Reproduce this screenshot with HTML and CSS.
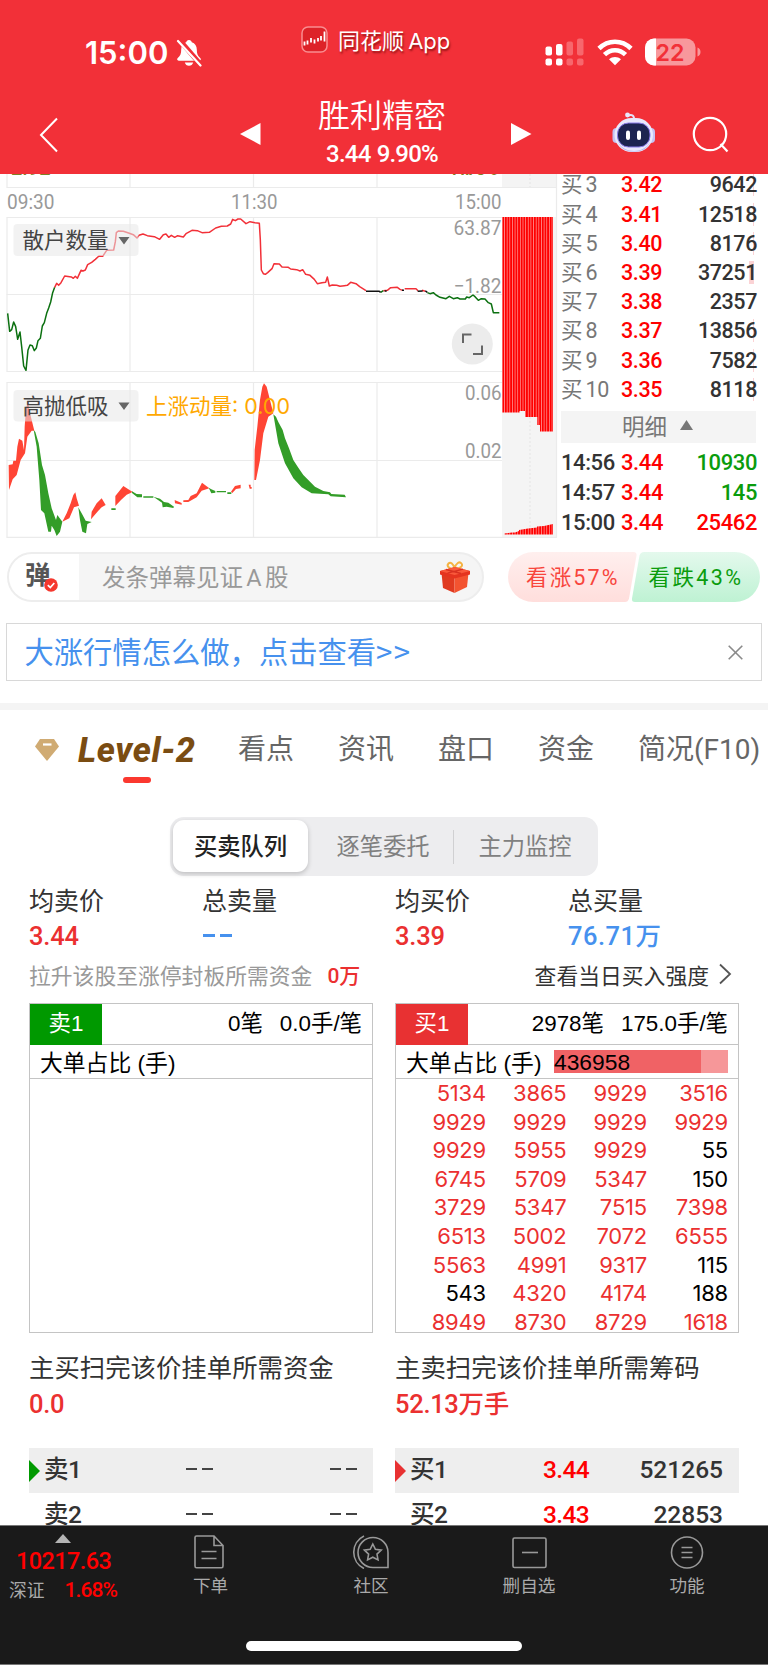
FILE: index.html
```html
<!DOCTYPE html>
<html lang="zh-CN">
<head>
    <meta charset="UTF-8">
    <meta name="viewport" content="width=device-width, initial-scale=1.0">
    <title>胜利精密</title>
    <link rel="stylesheet" href="styles.css">
</head>
<body>

<div class="content">
    <header class="header">
        <div class="status">
            <span class="clock">15:00</span>
            <svg class="bell" width="26" height="28" viewBox="0 0 26 28">
                <path d="M13 1c-1.600 0-2.600 1-2.800 2.300C7 4.300 5.200 7 5.200 10.500c0 4-.8 6.300-3.400 8.600-1.200 1.100-.7 2.600.9 2.600h20.600c1.600 0 2.100-1.500.9-2.600-2.600-2.300-3.400-4.600-3.400-8.600 0-3.500-1.800-6.200-5-7.200C15.600 2 14.600 1 13 1zM8.800 23.500c.5 2 2.200 3.300 4.200 3.300s3.700-1.300 4.200-3.300z" fill="#fff"/>
                <path d="M3.500 1l21.500 25" stroke="#f23038" stroke-width="5"/>
                <path d="M2 2l22.500 24.500" stroke="#fff" stroke-width="2.200" stroke-linecap="round"/>
            </svg>
            <svg class="app-icon" width="28" height="28" viewBox="0 0 28 28">
                <rect x="1" y="1" width="25" height="25" rx="6" fill="#dd2228" stroke="#f98d90" stroke-width="1.500"/>
                <path d="M3.500 15.500v4M6.500 14.500v4M10 12v4.500M13.500 13.500v4M17 12v3.500M20 10v4.500M23.500 5.500v10" stroke="#fff" stroke-width="1.800"/>
            </svg>
            <span class="app-name">同花顺 App</span>
            <svg class="signal" width="158" height="28" viewBox="544 37.500 158 28">
                <g fill="#fff">
                    <rect x="545.500" y="46" width="6.500" height="9" rx="2"/>
                    <rect x="556" y="43.500" width="6.500" height="11.500" rx="2"/>
                    <rect x="545.500" y="58" width="6.500" height="7" rx="2"/>
                    <rect x="556" y="58" width="6.500" height="7" rx="2"/>
                </g>
                <g fill="#f7676d">
                    <rect x="566.500" y="41" width="6.500" height="14" rx="2"/>
                    <rect x="577" y="38" width="6.500" height="17" rx="2"/>
                    <rect x="566.500" y="58" width="6.500" height="7" rx="2"/>
                    <rect x="577" y="58" width="6.500" height="7" rx="2"/>
                </g>
                <g fill="none" stroke="#fff" stroke-width="4.600">
                    <path d="M599 48c9-9 23-9 32 0"/>
                    <path d="M604.500 54.200c6-6 15-6 21 0"/>
                </g>
                <path d="M609 58.800c3.600-3.200 8.400-3.200 12 0l-6 6z" fill="#fff"/>
                <rect x="645" y="38" width="50.500" height="27" rx="9" fill="#f8989c"/>
                <path d="M656 38h-2a9 9 0 0 0-9 9v9a9 9 0 0 0 9 9h2z" fill="#fff"/>
                <path d="M697.500 47c4 1.500 4 7.500 0 9z" fill="#f8989c"/>
                <text class="battery-text" x="655.500" y="60" textLength="29" lengthAdjust="spacingAndGlyphs">22</text>
            </svg>
        </div>
        <div class="nav">
            <svg width="20" height="36" viewBox="0 0 20 36"><path d="M18 1.500L2 18l16 16.500" fill="none" stroke="#fff" stroke-width="2"/></svg>
            <svg class="prev" width="21" height="24" viewBox="0 0 21 24"><path d="M20.500 1v22L0 12z" fill="#fff"/></svg>
            <div class="title">
                <h1>胜利精密</h1>
                <p>3.44 9.90%</p>
            </div>
            <svg class="next" width="21" height="24" viewBox="0 0 21 24"><path d="M0 1v22l20.500-11z" fill="#fff"/></svg>
            <svg class="robot" width="44" height="42" viewBox="0 0 44 42">
                <path d="M16 3.500c4-1.500 6.500 0 6 5" fill="none" stroke="#e4e4fb" stroke-width="2"/>
                <circle cx="15.500" cy="3" r="2.400" fill="#e8e8fc"/>
                <rect x="0.500" y="16" width="8" height="15" rx="4" fill="#c5c2f3"/>
                <rect x="35" y="16" width="8" height="15" rx="4" fill="#c5c2f3"/>
                <rect x="2.500" y="6" width="38.500" height="34" rx="17" fill="#e9e9fc"/>
                <path d="M6 30c6 12 26 12 32 0-3 7-8 9.500-16 9.500S9 37 6 30z" fill="#b5b1ef"/>
                <rect x="5.500" y="11" width="32.500" height="24" rx="11" fill="#1d2450" stroke="#8a7be8"/>
                <rect x="14" y="18.500" width="4" height="9.500" rx="2" fill="#fff"/>
                <rect x="25" y="18.500" width="4" height="9.500" rx="2" fill="#fff"/>
            </svg>
            <svg width="38" height="38" viewBox="0 0 38 38"><circle cx="18" cy="18" r="16.200" fill="none" stroke="#fff" stroke-width="2.200"/><path d="M28.500 28l7 7.500" stroke="#fff" stroke-width="2.200"/></svg>
        </div>
    </header>

    <section class="market">
        <svg class="chart" width="558" height="364" viewBox="0 174 558 364">
            <defs>
                <pattern id="bars" x="502.300" y="0" width="2.640" height="10" patternUnits="userSpaceOnUse">
                    <rect width="2.640" height="10" fill="#ff9a9a"/>
                    <rect width="1.900" height="10" fill="#ff0000"/>
                </pattern>
            </defs>
            <path d="M502 174h55v14h-55zM502 217h55v320h-55z" fill="#f4f4f4"/>
            <path d="M530 174v14M530 217v320" stroke="#e4e4e4" stroke-dasharray="2 2"/>
            <g class="grid-lines">
                <path d="M6.500 187.500H557M6.500 217.500H502M6.500 294.500H502M6.500 371.500H502M6.500 382.500H502M6.500 460.500H502M6.500 537.300H557"/>
                <path d="M7 174v13.500M130 174v13.500M253.500 174v13.500M377 174v13.500M7 217.500v154M130 217.500v154M253.500 217.500v154M377 217.500v154M7 382.500v155M130 382.500v155M253.500 382.500v155M377 382.500v155M556.500 174v363"/>
            </g>
            <g class="clipped-labels">
                <text x="11" y="175.200">2.92</text>
                <text x="448" y="175.200" textLength="50">11.70%</text>
            </g>

            <g transform="translate(0 170) scale(.33333)">
                <g class="line">
                    <path stroke="#0b7010" d="M23 430L29 484 35 479 41 456 47 470 53 508 60 486 65 530 71 588 78 601 84 540 90 525 97 527 103 542 109 534 114 512 121 505 127 468 133 458 140 430 146 414 152 396 158 368 164 352"/>
                    <path stroke="#f23038" d="M164 352L170 340 176 346 183 338 194 318 214 321 220 325 226 319 232 325 243 301 249 303 256 300 263 284 275 277 286 268 297 258 308 259 320 241 341 240 346 215 349 188 355 183 370 184 388 190 400 194 411 204 417 196 429 192 442 197 463 200 479 208 490 194 498 192 506 202 514 196 524 202 533 197 550 201 558 191 576 181 592 182 606 188 628 187 647 174 664 169 682 168 692 162 698 148 706 152 714 147 722 147 738 161 750 155 765 158 778 160 781 210 784 300 790 311 796 313 803 308 816 296 822 281 838 282 846 291 865 292 872 297 890 299 900 303 908 299 917 313 930 316 943 328 952 341 966 338 977 337 982 321 988 348 997 345 1010 346 1020 349 1033 347 1042 346 1052 337 1068 341 1079 350 1098 362M1150 362L1162 361 1172 353 1192 352 1200 358 1208 361M1214 356L1248 356 1254 362M1266 361L1276 364"/>
                    <path stroke="#111" d="M1098 364L1138 364 1142 367M1154 363h6M1206 361l6 0M1253 364L1268 363M1276 363l6 4"/>
                    <path stroke="#0b7010" d="M1142 367L1150 362M1282 368L1290 371 1300 368 1308 375 1320 382 1338 386 1348 379 1360 386 1372 383 1380 387 1396 387 1400 381 1408 383 1419 375 1425 380 1435 391 1444 386 1455 387 1465 398 1474 402 1480 428 1498 428"/>
                </g>
                <g fill="#ff4535">
                    <path d="M26 885L38 883 40 872 48 872 52 830 57 806 67 812 72 840 74 770 78 715 84 695 90 730 103 782 95 782 82 800 75 850 62 870 50 915 38 928 27 960z"/>
                    <path d="M187 1055L200 1030 212 1000 220 975 226 967 230 985 237 1007 222 1012 208 1045z"/>
                    <path d="M273 1048L275 1025 290 1000 305 985 317 1005 305 1012 295 1022z"/>
                    <path d="M346 1008L346 978 370 948 398 966 380 974 363 990z"/>
                    <path d="M524 990L545 999 545 1004 525 1000zM550 991L565 990 572 978 590 970 606 938 628 955 605 962 590 982 565 996 550 996z"/>
                    <path d="M693 965L705 948 722 944 722 955 708 957 697 969zM746 944h6v7h3v5h-6z"/>
                    <path d="M763 930L764 840 772 770 780 690 787 650 792 640 800 650 810 690 820 730 805 740 790 790 780 870 768 930z"/>
                </g>
                <g fill="#339d28">
                    <path d="M101 780L106 786 116 820 126 885 135 915 145 970 155 1015 168 1050 172 1035 187 1055 180 1085 170 1098 163 1080 155 1067 153 1085 145 1085 133 1030 123 1020 118 930 110 830z"/>
                    <path d="M235 1012L245 1030 257 1052 275 1056 262 1062 258 1090 247 1085 240 1050z"/>
                    <path d="M334 1015h13v5h-13zM396 964l14 8 16 1v9h-14l-16-13zM430 979h30v4h-30zM460 980L480 986 492 996 505 998 522 1010 520 1014 500 1010 488 1012 486 998z"/>
                    <path d="M626 953L634 958 646 963 646 968 634 970zM650 963h28v4h-28zM682 967h12v5h-12z"/>
                    <path d="M820 733L828 740 835 756 848 780 855 805 867 835 880 870 895 893 910 915 945 950 970 963 990 967 994 972 1034 974 1038 982 992 979 985 973 935 970 905 952 880 925 855 880 835 820z"/>
                </g>
            </g>

            <path fill="url(#bars)" d="M502.300 217V412.500H519.500V411H525V417H537.300V425H540V431.500H553V217z"/>
            <path fill="url(#bars)" d="M504.300 534.500V533.500L512 532.500H515L519 531V530L528 528.500 537 527.500V526.500L544 526 553 524V534.500z"/>

            <g class="axis">
                <text x="7" y="209" textLength="47.500" lengthAdjust="spacingAndGlyphs">09:30</text>
                <text x="231" y="209" textLength="46.500" lengthAdjust="spacingAndGlyphs">11:30</text>
                <text x="455" y="209" textLength="46.500" lengthAdjust="spacingAndGlyphs">15:00</text>
                <text x="453.500" y="235" textLength="48" lengthAdjust="spacingAndGlyphs">63.87</text>
                <text x="453.500" y="293" textLength="48" lengthAdjust="spacingAndGlyphs">−1.82</text>
                <text x="465" y="400" textLength="36.500" lengthAdjust="spacingAndGlyphs">0.06</text>
                <text x="465" y="458" textLength="36.500" lengthAdjust="spacingAndGlyphs">0.02</text>
            </g>

            <circle cx="472.300" cy="344" r="20.500" fill="#ececec"/>
            <path d="M463 343v-8.500h8.500M482 345.500v8.500h-9" fill="none" stroke="#666" stroke-width="2"/>

            <rect x="13.500" y="224" width="125" height="32" rx="4" fill="#e8e8e8" fill-opacity=".55"/>
            <rect x="13.500" y="390" width="125" height="31.500" rx="4" fill="#e8e8e8" fill-opacity=".55"/>
            <g class="indicator">
                <text x="22.500" y="248">散户数量</text>
                <text x="22.500" y="413.700">高抛低吸</text>
                <text class="momentum" x="146" y="413.700" textLength="144">上涨动量: 0.00</text>
            </g>
            <path d="M118.500 237h11l-5.500 7.500zM118.500 402.500h11l-5.500 7.500z" fill="#666"/>
        </svg>

        <div class="book">
            <div class="quotes">
                <div class="quote"><span>买 3</span><b>3.42</b><em><i style="width: 1px"></i>9642</em></div>
                <div class="quote"><span>买 4</span><b>3.41</b><em><i style="width: 1px"></i>12518</em></div>
                <div class="quote"><span>买 5</span><b>3.40</b><em><i style="width: 1px"></i>8176</em></div>
                <div class="quote"><span>买 6</span><b>3.39</b><em><i style="width: 5px"></i>37251</em></div>
                <div class="quote"><span>买 7</span><b>3.38</b><em>2357</em></div>
                <div class="quote"><span>买 8</span><b>3.37</b><em><i style="width: 1px"></i>13856</em></div>
                <div class="quote"><span>买 9</span><b>3.36</b><em><i style="width: 1px"></i>7582</em></div>
                <div class="quote"><span>买 10</span><b>3.35</b><em><i style="width: 1px"></i>8118</em></div>
            </div>
            <div class="detail-title">明细<svg width="13" height="10" viewBox="0 0 13 10"><path d="M0 10L6.500 0 13 10z" fill="#777"/></svg></div>
            <div class="trade"><span>14:56</span><b>3.44</b><em class="green">10930</em></div>
            <div class="trade"><span>14:57</span><b>3.44</b><em class="green">145</em></div>
            <div class="trade"><span>15:00</span><b>3.44</b><em class="red">25462</em></div>
        </div>
    </section>

    <section class="danmu">
        <div class="danmu-input">
            <div class="danmu-toggle">弹
                <svg class="danmu-check" width="14" height="14" viewBox="0 0 14 14"><circle cx="7" cy="7" r="6.800" fill="#f5382e"/><path d="M3.800 7.200l2.500 2.400 4-4.600" fill="none" stroke="#fff" stroke-width="1.700"/></svg>
            </div>
            <div class="danmu-text">发条弹幕见证 A 股</div>
            <svg class="gift" width="32" height="34" viewBox="0 0 32 34">
                <path d="M15 9C9 8.500 7.500 5.500 9.500 3.500S14.500 4 15.500 8.500C17 3 20.500 1 22.500 3.500S21 8.500 16 9" fill="none" stroke="#f5b342" stroke-width="2"/>
                <path d="M2.500 13l13 4v16L4 28z" fill="#e03a20"/>
                <path d="M29.500 13l-14 4v16L28 27z" fill="#f35330"/>
                <path d="M1 11l15-4 15 4v3.500l-15.500 4L1 14.500z" fill="#e5341f"/>
                <path d="M1 11l15-4 15 4-15.500 4z" fill="#f9593b"/>
                <path d="M7 9.500l15 4M24 9.200l-15.500 4" stroke="#d93120" stroke-width="1.300"/>
            </svg>
        </div>
        <svg class="vote" width="254" height="50" viewBox="508 552 254 50">
            <defs>
                <linearGradient id="up" x1="0" y1="0" x2="0" y2="1"><stop offset="0" stop-color="#ffefee"/><stop offset="1" stop-color="#ffdedc"/></linearGradient>
                <linearGradient id="down" x1="0" y1="0" x2="0" y2="1"><stop offset="0" stop-color="#e4f9ed"/><stop offset="1" stop-color="#bef2d3"/></linearGradient>
            </defs>
            <path d="M534 552H634.500Q638 552 637.500 555.500L630 598.500Q629 602 626 602H534A25 25 0 0 1 534 552z" fill="url(#up)"/>
            <path d="M645 552H736A25 25 0 0 1 736 602H636Q632.500 602 633 598.500L640.500 555.500Q641.500 552 645 552z" fill="url(#down)"/>
            <text x="527" y="585" fill="#f8453c" textLength="91.500">看涨57%</text>
            <text x="649.500" y="585" fill="#0a9c0d" textLength="92.500">看跌43%</text>
        </svg>
    </section>

    <div class="banner">
        <span>大涨行情怎么做，点击查看<span class="more">&gt;&gt;</span></span>
        <svg width="15" height="15" viewBox="0 0 15 15"><path d="M.7.700l13.600 13.600M14.300.700L.7 14.300" stroke="#8a8a8a" stroke-width="1.600"/></svg>
    </div>

    <div class="divider"></div>

    <nav class="tabs">
        <svg width="26" height="24" viewBox="0 0 26 24"><path d="M6 1h14l5 7.500L13 23 1 8.500z" fill="#d0ab73"/><path d="M9 6.500h8.500" stroke="#fff" stroke-width="2.200"/></svg>
        <span class="tab active">Level-2</span>
        <span class="tab">看点</span>
        <span class="tab">资讯</span>
        <span class="tab">盘口</span>
        <span class="tab">资金</span>
        <span class="tab last">简况(F10)</span>
    </nav>

    <div class="segment">
        <span class="on">买卖队列</span>
        <span class="mid">逐笔委托</span>
        <span class="split">主力监控</span>
    </div>

    <section class="panels">
        <div class="panel">
            <div class="stats">
                <div><label>均卖价</label><b>3.44</b></div>
                <div><label>总卖量</label><b class="blue"><u></u><u></u></b></div>
            </div>
            <div class="hint">拉升该股至涨停封板所需资金<b>0万</b></div>
            <div class="box">
                <div class="box-head"><span class="tag sell">卖1</span><span>0笔</span><span>0.0手/笔</span></div>
                <div class="box-ratio">大单占比 (手)</div>
            </div>
            <p class="need">主买扫完该价挂单所需资金</p>
            <b class="need-value">0.0</b>
            <div class="level first sell"><span>卖1</span><span class="dash"><u></u><u></u></span><span class="dash"><u></u><u></u></span></div>
            <div class="level"><span>卖2</span><span class="dash"><u></u><u></u></span><span class="dash"><u></u><u></u></span></div>
        </div>
        <div class="panel">
            <div class="stats">
                <div><label>均买价</label><b>3.39</b></div>
                <div><label>总买量</label><b class="blue">76.71万</b></div>
            </div>
            <div class="hint link">查看当日买入强度<svg width="14" height="22" viewBox="0 0 14 22"><path d="M2 1.500L12 11 2 20.500" fill="none" stroke="#555" stroke-width="1.800"/></svg></div>
            <div class="box">
                <div class="box-head"><span class="tag buy">买1</span><span>2978笔</span><span>175.0手/笔</span></div>
                <div class="box-ratio">大单占比 (手)<div class="ratio">436958</div></div>
                <div class="orders">
                    <span>5134</span><span>3865</span><span>9929</span><span>3516</span>
                    <span>9929</span><span>9929</span><span>9929</span><span>9929</span>
                    <span>9929</span><span>5955</span><span>9929</span><span class="small">55</span>
                    <span>6745</span><span>5709</span><span>5347</span><span class="small">150</span>
                    <span>3729</span><span>5347</span><span>7515</span><span>7398</span>
                    <span>6513</span><span>5002</span><span>7072</span><span>6555</span>
                    <span>5563</span><span>4991</span><span>9317</span><span class="small">115</span>
                    <span class="small">543</span><span>4320</span><span>4174</span><span class="small">188</span>
                    <span>8949</span><span>8730</span><span>8729</span><span>1618</span>
                </div>
            </div>
            <p class="need">主卖扫完该价挂单所需筹码</p>
            <b class="need-value">52.13万手</b>
            <div class="level first buy"><span>买1</span><b>3.44</b><em>521265</em></div>
            <div class="level"><span>买2</span><b>3.43</b><em>22853</em></div>
        </div>
    </section>
</div>

<footer class="toolbar">
    <div class="index">
        <svg width="16" height="9" viewBox="0 0 16 9"><path d="M8 0l8 9H0z" fill="#b5b5b5"/></svg>
        <b>10217.63</b>
        <p>深证<span>1.68%</span></p>
    </div>
    <div class="tool order">
        <svg width="34" height="34" viewBox="0 0 34 34"><path d="M3 2.500q0-1.500 1.500-1.500H22l9 9.500V31q0 1.700-1.500 1.700H4.500Q3 32.700 3 31zM22 1v9.500h9M9.500 16.500h15M9.500 23.500h15"/></svg>
        <span>下单</span>
    </div>
    <div class="tool">
        <svg width="38" height="34" viewBox="0 0 38 34"><path d="M36 32.500H21A15 15 0 1 1 36 17.500zM12 1A18 18 0 0 0 12 33.500M20.800 9l2.600 5.300 5.800.8-4.200 4 1 5.800-5.200-2.700-5.200 2.700 1-5.800-4.200-4 5.800-.8z"/></svg>
        <span>社区</span>
    </div>
    <div class="tool">
        <svg width="36" height="34" viewBox="-1 0 36 34"><rect x="1" y="3" width="33" height="29.500" rx="1.500"/><path d="M10 17.500h16"/></svg>
        <span>删自选</span>
    </div>
    <div class="tool">
        <svg width="34" height="34" viewBox="0 0 34 34"><circle cx="17" cy="17.500" r="15.500"/><path d="M11.500 12.500h11M11.500 17.500h11M11.500 22.500h11"/></svg>
        <span>功能</span>
    </div>
    <div class="home-bar"></div>
</footer>

</body>
</html>
```

FILE: styles.css
```css
* {
    box-sizing: border-box;
}
body {
    margin: 0;
    width: 768px;
    height: 1665px;
    overflow: hidden;
    background: #fff;
    color: #333;
    font-family: Roboto, "Noto Sans CJK SC", sans-serif;
}
h1, p {
    margin: 0;
    font-weight: 400;
}
b {
    font-weight: 500;
}
em, i {
    font-style: normal;
}
u {
    text-decoration: none;
}
svg {
    display: block;
    flex: none;
}
span, b, label {
    white-space: nowrap;
}
.content {
    height: 1525px;
    overflow: hidden;
}

/* header */
.header {
    height: 174px;
    background: #f23038;
    color: #fff;
}
.status {
    display: flex;
    height: 80px;
    padding: 26px 0 0 85px;
}
.clock {
    width: 91px;
    margin-top: 7px;
    font: 600 31px/40px Inter, sans-serif;
    letter-spacing: 0;
}
.bell {
    margin-top: 13px;
}
.app-icon {
    margin-left: 99px;
}
.app-name {
    width: 120px;
    margin-left: 9px;
    font-family: Inter, "Noto Sans CJK SC", sans-serif;
    font-size: 22px;
    line-height: 30px;
    word-spacing: -2px;
    text-shadow: 1px 2px 2px rgba(90, 0, 0, 0.6);
}
.signal {
    margin: 11.500px 0 0 86px;
}
.battery-text {
    font: 600 23px Inter, sans-serif;
    fill: #f23038;
}
.nav {
    display: flex;
    height: 94px;
    align-items: center;
    padding: 15px 0 0 39px;
}
.prev {
    margin: -2px 0 0 181px;
}
.title {
    width: 250px;
    margin-top: -2px;
    padding-right: 8px;
    text-align: center;
}
.title h1 {
    font-family: "Noto Sans CJK SC", sans-serif;
    font-size: 32px;
    line-height: 40px;
    font-weight: 350;
}
.title p {
    font-size: 24px;
    line-height: 42px;
    font-weight: 500;
    letter-spacing: -0.800px;
    word-spacing: 1px;
}
.next {
    margin-top: -2px;
}
.robot {
    margin: -4px 36px 0 80px;
}

/* charts and order book */
.market {
    display: flex;
    height: 364px;
    overflow: hidden;
}
.grid-lines {
    fill: none;
    stroke: #ebebeb;
    stroke-width: 1.200;
}
.clipped-labels {
    font-size: 20px;
    font-weight: 500;
    fill: #7d8226;
}
.line {
    fill: none;
    stroke-width: 4.500;
    stroke-linejoin: round;
}
.axis {
    font-size: 21px;
    fill: #999;
}
.indicator {
    font-family: "Noto Sans CJK SC", sans-serif;
    font-size: 21.500px;
    fill: #444;
}
.momentum {
    font-family: Inter, "Noto Sans CJK SC", sans-serif;
    fill: #ffa800;
}
.book {
    width: 204px;
    padding-left: 3px;
}
.quotes {
    margin-top: -3.600px;
}
.quote, .trade {
    display: grid;
    grid-template-columns: 60px 50px 86px;
    height: 29.200px;
    line-height: 29.200px;
    font-size: 21.500px;
    letter-spacing: -0.400px;
}
.quote span {
    color: #777;
    word-spacing: -1.500px;
}
.quote b, .trade b {
    color: #f00;
}
.quote em, .trade em {
    position: relative;
    text-align: right;
    font-weight: 500;
}
.quote i {
    position: absolute;
    right: 3px;
    top: 3px;
    height: 23px;
    background: #fbd3d5;
    z-index: -1;
}
.detail-title {
    display: flex;
    align-items: center;
    justify-content: center;
    gap: 13px;
    width: 195px;
    height: 32px;
    margin: 7px 0 4.800px;
    padding: 0 2px 3px 0;
    background: #f4f4f4;
    color: #777;
    font-size: 22.500px;
}
.trade {
    height: 30.300px;
    line-height: 30.300px;
    font-size: 22px;
}
.trade span {
    font-weight: 500;
}
.red {
    color: #f00;
}
.green {
    color: #0a9c0d;
}

/* comments */
.danmu {
    display: flex;
    justify-content: space-between;
    margin: 14px 7px 0 7px;
}
.danmu-input {
    display: flex;
    align-items: center;
    width: 477px;
    height: 50px;
    border: 2px solid #ededed;
    border-radius: 25px;
    background: #f5f5f5;
    overflow: hidden;
}
.danmu-toggle {
    position: relative;
    width: 70px;
    height: 46px;
    padding-left: 16px;
    background: #fff;
    color: #555;
    font-size: 25.500px;
    line-height: 43px;
    font-weight: 700;
}
.danmu-check {
    position: absolute;
    left: 35px;
    top: 24px;
}
.danmu-text {
    width: 337px;
    padding: 0 0 2px 23px;
    color: #999;
    font-size: 23.500px;
    word-spacing: -2.500px;
}
.gift {
    margin-left: 23px;
}
.vote text {
    font-size: 21.500px;
}
.banner {
    display: flex;
    align-items: center;
    justify-content: space-between;
    height: 58px;
    margin: 21px 6px 0 6px;
    padding: 0 18px 0 17.500px;
    border: 1px solid #d8d8d8;
    color: #4691ee;
    font-family: "Noto Sans CJK SC", sans-serif;
    font-size: 29.300px;
    line-height: 50px;
}
.banner > span {
    padding-bottom: 4px;
}
.more {
    letter-spacing: 1.500px;
}
.divider {
    height: 7px;
    margin-top: 22px;
    background: #f4f4f4;
}

/* tabs */
.tabs {
    display: flex;
    align-items: center;
    height: 80px;
    padding-left: 34px;
}
.tab {
    flex: none;
    width: 100px;
    color: #666;
    font-size: 28px;
    line-height: 78px;
}
.tab.active {
    position: relative;
    width: 178px;
    padding-left: 18px;
    color: #7a4c12;
    font-size: 34.500px;
    font-weight: 800;
    font-style: italic;
    line-height: 80px;
    letter-spacing: 0.600px;
}
.tab.active::after {
    content: "";
    position: absolute;
    left: 63px;
    top: 67px;
    width: 28px;
    height: 6px;
    border-radius: 3px;
    background: #fb382f;
}
.tab.last {
    width: auto;
}
.segment {
    display: flex;
    width: 428px;
    height: 59px;
    margin: 27px 0 0 170px;
    padding: 3px;
    border-radius: 14px;
    background: #ededef;
}
.segment span {
    flex: 1;
    padding-left: 2px;
    color: #808080;
    font-size: 23.300px;
    line-height: 54px;
    text-align: center;
}
.segment .on {
    flex: none;
    width: 135px;
    height: 52px;
    padding-left: 0;
    border-radius: 11px;
    background: #fff;
    box-shadow: 0 2px 5px rgba(0, 0, 0, 0.2);
    color: #222;
    font-weight: 500;
    margin-right: 3px;
}
.segment .split {
    background: linear-gradient(#d0d0d2, #d0d0d2) 0 10px / 1px 34px no-repeat;
}

/* level-2 queues */
.panels {
    display: flex;
    gap: 22px;
    padding: 9px 0 0 29px;
}
.panel {
    width: 344px;
}
.stats {
    display: grid;
    grid-template-columns: 173px 1fr;
}
.stats label, .stats b {
    display: block;
    height: 34px;
    line-height: 34px;
    font-size: 25px;
}
.stats b {
    color: #eb3030;
    font-size: 25.500px;
    line-height: 35px;
    letter-spacing: -0.200px;
}
.stats b.blue {
    color: #4691ee;
    letter-spacing: 0.500px;
}
.stats u {
    display: inline-block;
    width: 12px;
    height: 3px;
    margin: 0 3.500px 5px 1px;
    vertical-align: middle;
    background: #4691ee;
}
.hint {
    display: flex;
    align-items: center;
    height: 32px;
    margin-top: 5px;
    color: #999;
    font-size: 21.800px;
}
.hint b {
    margin-left: 15px;
    font-size: 21px;
    color: #eb3030;
}
.hint.link {
    justify-content: flex-end;
    gap: 9px;
    padding-right: 7px;
    color: #333;
}
.box {
    height: 330px;
    margin-top: 13px;
    border: 1px solid #c4c4c4;
    color: #000;
    overflow: hidden;
}
.box-head {
    display: flex;
    gap: 17px;
    height: 41px;
    padding-right: 10px;
    border-bottom: 1px solid #c4c4c4;
    font: 22.400px/39px "Liberation Sans", "Noto Sans CJK SC", sans-serif;
}
.tag {
    width: 72px;
    height: 41px;
    margin-right: auto;
    color: #fff;
    text-align: center;
}
.tag.sell {
    background: #090;
}
.tag.buy {
    background: #e83132;
}
.box-ratio {
    display: flex;
    align-items: center;
    height: 34px;
    padding: 0 10px;
    border-bottom: 1px solid #c4c4c4;
    font-family: "Liberation Sans", "Noto Sans CJK SC", sans-serif;
    font-size: 22.800px;
}
.ratio {
    width: 174px;
    height: 23px;
    margin-left: auto;
    line-height: 25px;
    background: linear-gradient(90deg, #f06265 84.500%, #f69799 84.500%);
}
.orders {
    display: grid;
    grid-template-columns: 90px 80.500px 80.500px 81px;
    color: #eb3030;
    font: 22px/28.600px Inter, sans-serif;
    letter-spacing: -0.200px;
    text-align: right;
}
.small {
    color: #000;
}
.need {
    height: 34px;
    margin-top: 19px;
    font-size: 25.400px;
    line-height: 33px;
}
.need-value {
    display: block;
    height: 34px;
    margin-bottom: 28px;
    color: #eb3030;
    font-size: 25.500px;
    line-height: 36px;
    letter-spacing: -0.300px;
}
.level {
    display: grid;
    grid-template-columns: 133px 69px 111px;
    height: 45px;
    padding-left: 15px;
    font-size: 24.500px;
    line-height: 43px;
    font-weight: 500;
    letter-spacing: -0.600px;
}
.level.first {
    background: #eee;
    position: relative;
}
.level.first::before {
    content: "";
    position: absolute;
    left: 0;
    top: 12px;
    border: 11px solid transparent;
    border-left-color: #090;
    border-right: none;
}
.level.buy::before {
    border-left-color: #e83132;
}
.level b {
    color: #f00;
}
.level em {
    text-align: right;
    letter-spacing: 0;
}
.dash {
    display: flex;
    gap: 5px;
    align-items: center;
    padding: 0 0 3px 9px;
}
.dash:last-child {
    justify-content: flex-end;
}
.dash u {
    width: 11px;
    height: 2.500px;
    background: #444;
}

/* bottom toolbar */
.toolbar {
    position: relative;
    display: grid;
    grid-template-columns: 134px repeat(4, 158px);
    height: 140px;
    border-top: 1px solid #777;
    border-bottom: 1px solid #777;
    background: #1a1a1a;
    color: #aaa;
}
.index {
    padding-top: 8px;
}
.index svg {
    margin-left: 55px;
}
.index b {
    display: block;
    padding-left: 16px;
    color: #f00;
    font-size: 23.500px;
    line-height: 37px;
    letter-spacing: -0.600px;
}
.index p {
    padding-left: 9px;
    font-size: 17.800px;
    line-height: 20px;
}
.index p span {
    margin-left: 20px;
    color: #f00;
    font-size: 21px;
    font-weight: 500;
    letter-spacing: -0.900px;
}
.tool {
    display: flex;
    flex-direction: column;
    align-items: center;
    padding-top: 9px;
    font-size: 17.600px;
    line-height: 34px;
}
.tool.order {
    padding-right: 5px;
}
.tool.order svg {
    margin-right: 3px;
}
.tool svg {
    fill: none;
    stroke: #999;
    stroke-width: 1.600;
}
.home-bar {
    position: absolute;
    left: 246px;
    bottom: 13px;
    width: 276px;
    height: 10px;
    border-radius: 5px;
    background: #fff;
}
```
